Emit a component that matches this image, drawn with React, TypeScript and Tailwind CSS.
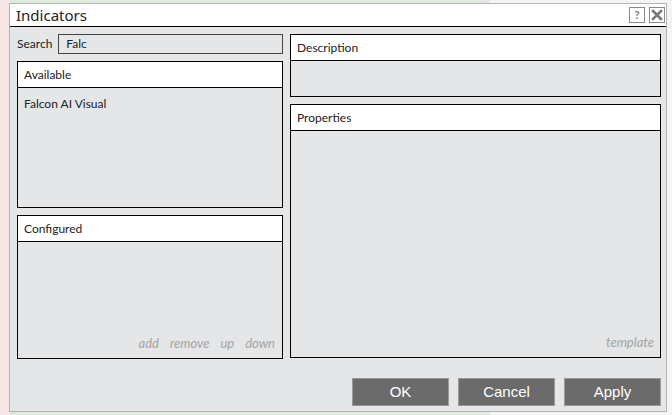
import React from "react";

const Panel = ({
  title,
  className,
  children,
}: {
  title: string;
  className?: string;
  children?: React.ReactNode;
}) => {
  return (
    <div className={`flex flex-col border border-black ${className ?? ""}`}>
      <div className="flex h-[26px] shrink-0 items-center border-b border-black bg-white px-[6px] text-[12px] text-[#222]">
        {title}
      </div>
      <div className="relative flex-1 bg-[#e5e6e8]">{children}</div>
    </div>
  );
};

const App = () => {
  return (
    <div className="relative h-[415px] w-[672px] overflow-hidden bg-[#f4f4f4] font-['Lato',sans-serif]">
      {/* chart behind the dialog */}
      <div className="absolute left-0 top-0 h-full w-[10px] bg-[#f5e5e5]" />
      <div className="absolute left-[10px] top-0 h-[4px] w-[480px] bg-[#dfe9df]" />
      <div className="absolute left-[10px] bottom-0 h-[4px] w-[480px] bg-[#dfe9df]" />

      <div className="absolute left-[9px] top-[3px] flex h-[409px] w-[658px] flex-col border border-[#b4b4b4] bg-[#e5e6e8]">
        {/* title bar */}
        <div className="flex h-[23px] shrink-0 items-center justify-between border-b border-black bg-white pl-[6px] pr-[1px]">
          <span className="font-['Noto_Sans',sans-serif] text-[15px] text-[#222]">Indicators</span>
          <div className="flex gap-[4px]">
            <div className="flex h-[16px] w-[16px] items-center justify-center border border-[#8a8a8a] bg-white text-[11px] font-bold text-[#777]">
              ?
            </div>
            <div className="flex h-[16px] w-[16px] items-center justify-center border border-[#8a8a8a] bg-white">
              <svg width="12" height="12" viewBox="0 0 12 12">
                <path d="M2 2 L10 10 M10 2 L2 10" stroke="#777" strokeWidth="2.6" strokeLinecap="square" />
              </svg>
            </div>
          </div>
        </div>

        {/* body */}
        <div className="flex flex-1 gap-[7px] pl-[7px] pr-[5px] pt-[7px]">
          <div className="flex w-[266px] flex-col">
            <div className="flex h-[20px] items-center gap-[6px]">
              <span className="text-[12px] text-[#222]">Search</span>
              <div className="flex h-[20px] flex-1 items-center border border-[#444] bg-[#e5e6e8] px-[7px] text-[12px] text-[#222]">
                Falc
              </div>
            </div>
            <Panel title="Available" className="mt-[7px] h-[147px]">
              <div className="px-[6px] pt-[7px] text-[12px] text-[#222]">Falcon AI Visual</div>
            </Panel>
            <Panel title="Configured" className="mt-[7px] h-[144px]">
              <div className="absolute bottom-[5px] right-[7px] flex gap-[11px] text-[13px] italic text-[#a4a4a4]">
                <span>add</span>
                <span>remove</span>
                <span>up</span>
                <span>down</span>
              </div>
            </Panel>
          </div>

          <div className="flex flex-1 flex-col">
            <Panel title="Description" className="h-[63px]" />
            <Panel title="Properties" className="mt-[7px] h-[254px]">
              <div className="absolute bottom-[5px] right-[6px] text-[13px] italic text-[#a4a4a4]">template</div>
            </Panel>
          </div>
        </div>

        {/* buttons */}
        <div className="flex shrink-0 justify-end gap-[9px] pb-[5px] pr-[5px]">
          {["OK", "Cancel", "Apply"].map((label) => (
            <button
              key={label}
              className="flex h-[28px] w-[97px] items-center justify-center border border-[#9a9a9a] bg-[#6b6b6b] font-['Liberation_Sans',sans-serif] text-[15px] text-white"
            >
              {label}
            </button>
          ))}
        </div>
      </div>
    </div>
  );
};

export default App;
